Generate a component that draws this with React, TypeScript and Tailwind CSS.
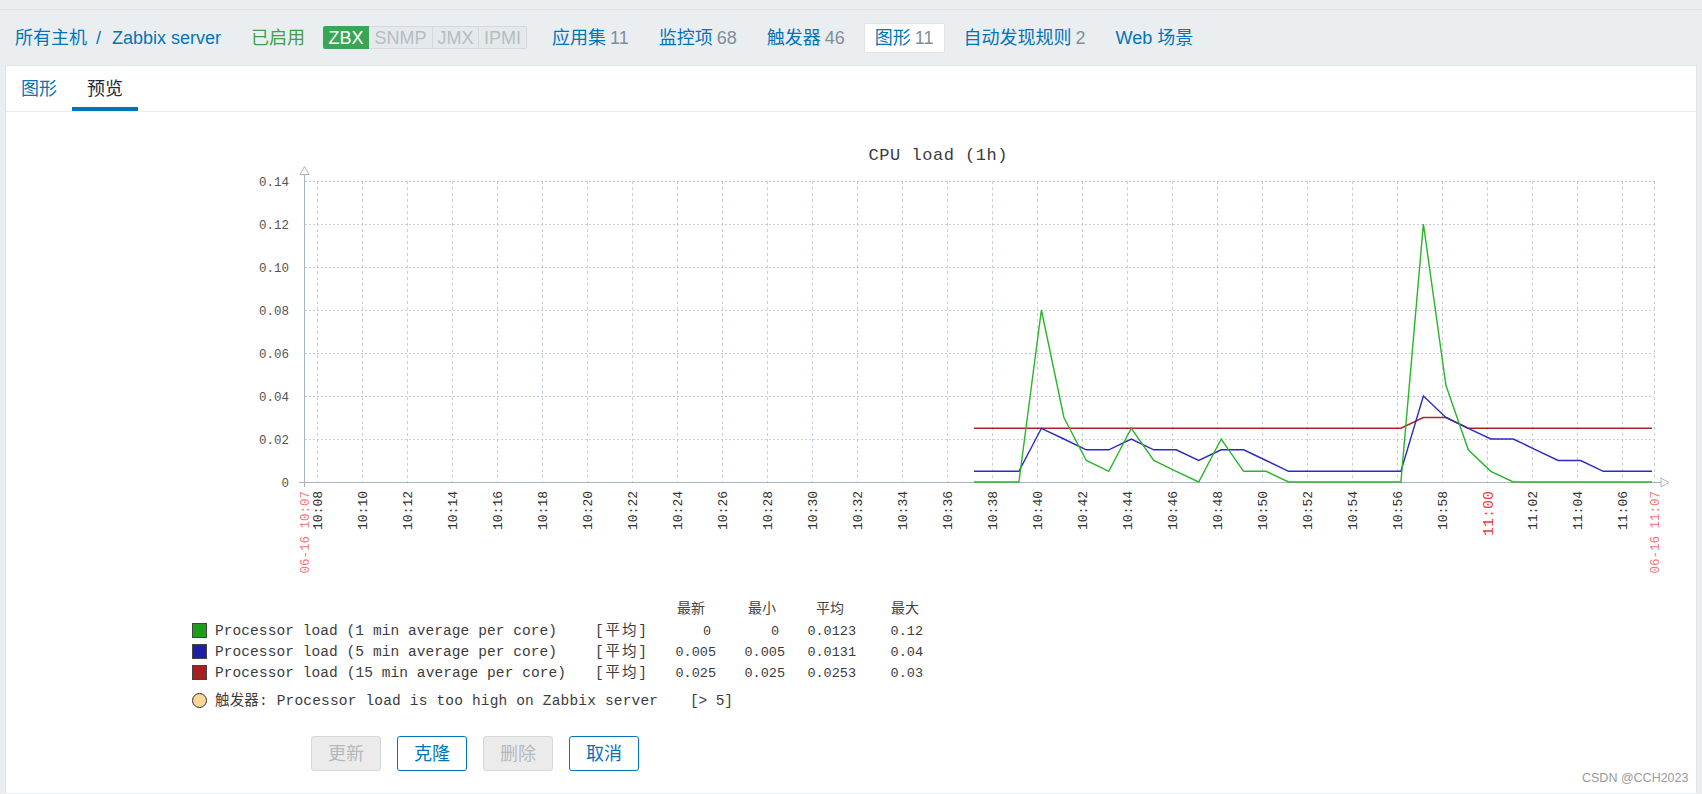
const BLUE = '#0275b8'

// chart geometry (page coordinates, the svg viewBox maps 1:1)
const X0 = 974
const DX = 22.47
const yv = (v: number) => 483 - v * 2150

const GREEN = [0, 0, 0, 0.08, 0.03, 0.01, 0.005, 0.025, 0.01, 0.005, 0, 0.02, 0.005, 0.005, 0, 0, 0, 0, 0, 0, 0.12, 0.045, 0.015, 0.005, 0]
const BLUE_S = [0.005, 0.005, 0.005, 0.025, 0.02, 0.015, 0.015, 0.02, 0.015, 0.015, 0.01, 0.015, 0.015, 0.01, 0.005, 0.005, 0.005, 0.005, 0.005, 0.005, 0.04, 0.03, 0.025, 0.02, 0.02, 0.015, 0.01, 0.01, 0.005, 0.005]
const RED = [0.025, 0.025, 0.025, 0.025, 0.025, 0.025, 0.025, 0.025, 0.025, 0.025, 0.025, 0.025, 0.025, 0.025, 0.025, 0.025, 0.025, 0.025, 0.025, 0.025, 0.03, 0.03, 0.025]

const toPoints = (vals: number[], endV: number) =>
  vals.map((v, i) => `${(X0 + i * DX).toFixed(1)},${yv(v).toFixed(1)}`).join(' ') + ` 1652,${yv(endV).toFixed(1)}`

const MONO = "'Liberation Mono', 'Noto Sans CJK SC', monospace"

const timeLabel = (i: number) => {
  const m = 8 + i * 2
  const h = 10 + Math.floor(m / 60)
  const mm = m % 60
  return `${h}:${mm < 10 ? '0' + mm : mm}`
}

const NAV = [
  { label: '应用集', count: '11' },
  { label: '监控项', count: '68' },
  { label: '触发器', count: '46' },
  { label: '图形', count: '11', active: true },
  { label: '自动发现规则', count: '2' },
  { label: 'Web 场景', count: '' },
]

const LEGEND = [
  { color: '#1c9e1c', name: 'Processor load (1 min average per core)', w: 342, vals: [['0', 711], ['0', 779], ['0.0123', 856], ['0.12', 923]] },
  { color: '#1e1ea6', name: 'Processor load (5 min average per core)', w: 342, vals: [['0.005', 716], ['0.005', 785], ['0.0131', 856], ['0.04', 923]] },
  { color: '#a61e1e', name: 'Processor load (15 min average per core)', w: 351, vals: [['0.025', 716], ['0.025', 785], ['0.0253', 856], ['0.03', 923]] },
]

function CpuChart() {
  const vLines = Array.from({ length: 30 }, (_, i) => 317.5 + i * 45)
  return (
    <svg width={1690} height={612} viewBox="6 113 1690 612" className="block">
      <text x={938} y={161} textAnchor="middle" fontSize={17} fontFamily={MONO} fill="#3c3c3c" textLength={139} lengthAdjust="spacing">
        CPU load (1h)
      </text>

      {/* grid */}
      {[1, 2, 3, 4, 5, 6, 7].map((k) => (
        <line key={k} x1={305} x2={1654} y1={483.5 - 43 * k} y2={483.5 - 43 * k} stroke="#c6cfd7" strokeDasharray="2 2" />
      ))}
      {vLines.concat([1654.5]).map((x) => (
        <line key={x} x1={x} x2={x} y1={182} y2={483} stroke="#c6cfd7" strokeDasharray="3 3" />
      ))}

      {/* y labels */}
      {['0', '0.02', '0.04', '0.06', '0.08', '0.10', '0.12', '0.14'].map((t, k) => (
        <text key={t} x={289} y={487.5 - 43 * k} textAnchor="end" fontSize={12.5} fontFamily={MONO} fill="#555">
          {t}
        </text>
      ))}

      {/* axes */}
      <line x1={304.5} x2={304.5} y1={175.5} y2={488} stroke="#a7b5c1" />
      <polygon points="304.5,167.5 300,175.5 309,175.5" fill="#fff" stroke="#a7b5c1" />
      <line x1={299} x2={1661} y1={483.5} y2={483.5} stroke="#a7b5c1" />
      <polygon points="1669,483.5 1661,479 1661,488" fill="#fff" stroke="#a7b5c1" />

      {/* series */}
      <polyline points={toPoints(RED, 0.025)} fill="none" stroke="#b52222" strokeWidth={1.6} />
      <polyline points={toPoints(BLUE_S, 0.005)} fill="none" stroke="#2b2bc0" strokeWidth={1.4} />
      <polyline points={toPoints(GREEN, 0)} fill="none" stroke="#2ab42a" strokeWidth={1.4} />

      {/* x labels */}
      {vLines.map((x, i) => {
        const t = timeLabel(i)
        const big = t === '11:00'
        return (
          <text
            key={t}
            transform={`translate(${x + (big ? 5.5 : 4.5)},492) rotate(-90)`}
            textAnchor="end"
            fontSize={big ? 15 : 13}
            fontFamily={MONO}
            fill={big ? '#f03c3c' : '#333'}
          >
            {t}
          </text>
        )
      })}
      <text transform="translate(308.5,492) rotate(-90)" textAnchor="end" fontSize={12.5} fontFamily={MONO} fill="#f27676">
        06-16 10:07
      </text>
      <text transform="translate(1658.5,492) rotate(-90)" textAnchor="end" fontSize={12.5} fontFamily={MONO} fill="#f27676">
        06-16 11:07
      </text>

      {/* legend */}
      {[['最新', 691], ['最小', 762], ['平均', 830], ['最大', 905]].map(([t, x]) => (
        <text key={t} x={x} y={614} textAnchor="middle" fontSize={14} fontFamily={MONO} fill="#444">
          {t}
        </text>
      ))}
      {LEGEND.map((row, i) => {
        const y = 636 + i * 21
        return (
          <g key={row.name} fontFamily={MONO} fill="#3c3c3c" fontSize={14.5}>
            <rect x={192.5} y={y - 11.5} width={14} height={14} fill={row.color} stroke="#444" />
            <text x={215} y={y} textLength={row.w} lengthAdjust="spacing">
              {row.name}
            </text>
            <text x={595} y={y} textLength={52} lengthAdjust="spacing">
              [平均]
            </text>
            {row.vals.map(([v, x], j) => (
              <text key={j} x={x} y={y} textAnchor="end" fontSize={13.5}>
                {v}
              </text>
            ))}
          </g>
        )
      })}
      <circle cx={199.5} cy={701.5} r={7} fill="#fdd597" stroke="#333" />
      <text x={215} y={706} fontSize={14.5} fontFamily={MONO} fill="#3c3c3c" textLength={443} lengthAdjust="spacing">
        触发器: Processor load is too high on Zabbix server
      </text>
      <text x={690} y={706} fontSize={14.5} fontFamily={MONO} fill="#3c3c3c" textLength={43} lengthAdjust="spacing">
        [&gt; 5]
      </text>
    </svg>
  )
}

export default function App() {
  return (
    <div className="relative min-h-screen bg-[#ebeef0] text-[18px] leading-none text-[#1f2c33] font-['Liberation_Sans','Noto_Sans_CJK_SC',sans-serif]">
      <div className="h-[10px] border-b border-[#dce2e6]" />

      {/* header / breadcrumbs */}
      <nav className="flex h-[55px] items-center pl-[15px]">
        <a className="text-[#0275b8]">所有主机</a>
        <span className="ml-[9px] mr-[11px] text-[#0275b8]">/</span>
        <a className="text-[#0275b8]">Zabbix server</a>
        <span className="ml-[30px] text-[#429e47]">已启用</span>
        <div className="ml-[18px] flex h-[23px]">
          <span className="flex w-[46px] items-center justify-center rounded-l-[2px] bg-[#3aa655] text-white">ZBX</span>
          <span className="flex w-[64px] items-center justify-center border border-l-0 border-[#d3d9dd] bg-[#e6e9ec] text-[#b5bdc3]">SNMP</span>
          <span className="flex w-[46px] items-center justify-center border border-l-0 border-[#d3d9dd] bg-[#e6e9ec] text-[#b5bdc3]">JMX</span>
          <span className="flex w-[48px] items-center justify-center rounded-r-[2px] border border-l-0 border-[#d3d9dd] bg-[#e6e9ec] text-[#b5bdc3]">IPMI</span>
        </div>
        <div className="ml-[14px] flex items-center gap-[8px]">
          {NAV.map((n) => (
            <a
              key={n.label}
              className={
                n.active
                  ? 'flex h-[30px] items-center rounded-[2px] border border-[#dfe4e7] bg-white px-[10px] text-[#0275b8]'
                  : 'flex h-[30px] items-center border border-transparent px-[10px] text-[#0275b8]'
              }
            >
              {n.label}
              {n.count && <span className="ml-[4px] text-[#7f8f9a]">{n.count}</span>}
            </a>
          ))}
        </div>
      </nav>

      {/* main panel */}
      <div className="mx-[5px] min-h-[728px] border border-b-0 border-[#dfe4e7] bg-white">
        <div className="flex h-[46px] border-b border-[#ebeef0]">
          <a className="flex items-center border-y-4 border-transparent px-[15px] text-[#0275b8]">图形</a>
          <a className="flex items-center border-y-4 border-t-transparent border-b-[#0275b8] px-[15px] text-[#1f2c33]">预览</a>
        </div>

        <CpuChart />

        <div className="mt-[12px] flex gap-[16px] pl-[305px]">
          <button className="h-[35px] w-[70px] rounded-[3px] border border-[#d4d9dc] bg-[#ebebeb] text-[18px] text-[#b3babf]">更新</button>
          <button className="h-[35px] w-[70px] rounded-[3px] border border-[#0275b8] bg-white text-[18px] text-[#0275b8]">克隆</button>
          <button className="h-[35px] w-[70px] rounded-[3px] border border-[#d4d9dc] bg-[#ebebeb] text-[18px] text-[#b3babf]">删除</button>
          <button className="h-[35px] w-[70px] rounded-[3px] border border-[#0275b8] bg-white text-[18px] text-[#0275b8]">取消</button>
        </div>
      </div>

      {/* watermark */}
      <span className="absolute left-[1582px] top-[772px] text-[12.5px] text-[#9a9a9a]">CSDN @CCH2023</span>
    </div>
  )
}
